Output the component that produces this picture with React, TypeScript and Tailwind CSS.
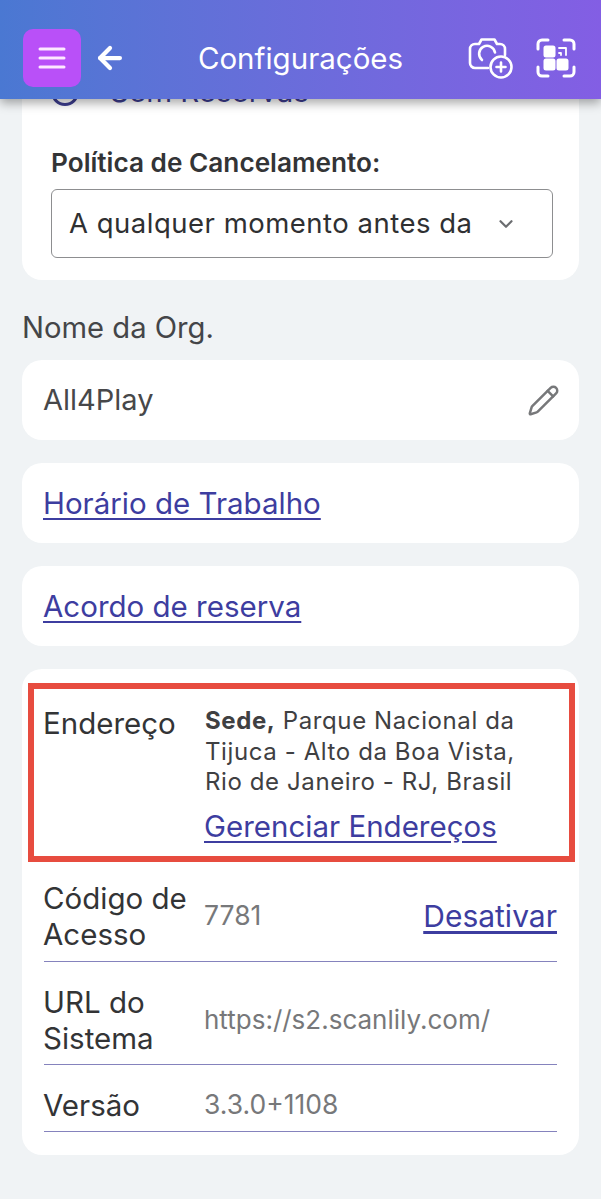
import { ArrowLeft, ChevronDown, Pencil } from "lucide-react"

const font = "font-['Inter','Noto_Sans',sans-serif]"
const link = "text-[29.5px] text-[#3d3da0] underline underline-offset-4"

function Burger() {
  return (
    <svg width="28" height="22" viewBox="0 0 28 22" fill="none" stroke="#fde8ff" strokeWidth="3" strokeLinecap="round">
      <path d="M2 2h24M2 11h24M2 20h24" />
    </svg>
  )
}

function CameraPlus() {
  return (
    <svg width="45" height="41" viewBox="0 0 45 41" fill="none" stroke="white" strokeWidth="2.6" strokeLinecap="round" strokeLinejoin="round">
      <path d="M20 30H7a5 5 0 0 1-5-5V11a5 5 0 0 1 5-5h4l2.500-4.500h13L29 6h3a5 5 0 0 1 5 5v6" />
      <path d="M14 22a8 8 0 1 1 13-7.500" />
      <circle cx="33" cy="29" r="10.500" />
      <path d="M33 24.500v9M28.500 29h9" />
    </svg>
  )
}

function ScanGrid() {
  return (
    <svg width="40" height="40" viewBox="0 0 40 40" fill="none" stroke="white" strokeWidth="3" strokeLinecap="round" strokeLinejoin="round">
      <path d="M2 11V6a4 4 0 0 1 4-4h6M28 2h6a4 4 0 0 1 4 4v5M2 29v5a4 4 0 0 0 4 4h6M38 29v5a4 4 0 0 1-4 4h-6" />
      <rect x="9" y="9" width="9" height="9" rx="1" fill="white" />
      <rect x="9" y="22" width="9" height="9" rx="1" fill="white" />
      <rect x="22" y="22" width="9" height="9" rx="1" fill="white" />
      <path d="M23 10h7v7M23 15h2v2" strokeWidth="1.8" />
    </svg>
  )
}

function Row({ label, children, right, className }: { label: string; children: React.ReactNode; right?: React.ReactNode; className: string }) {
  return (
    <div className={`flex items-center border-b border-[#8583bd] ${className}`}>
      <div className="-ml-px w-[161px] shrink-0 text-[29.5px] leading-[36px] text-[#333436]">{label}</div>
      <div className="flex-1 text-[#77787a]">{children}</div>
      {right}
    </div>
  )
}

export default function App() {
  return (
    <div className={`relative h-[1199px] w-[601px] overflow-hidden bg-[#f0f3f5] ${font}`}>
      {/* Header */}
      <header className="absolute inset-x-0 top-0 z-10 flex h-[99px] items-end bg-gradient-to-r from-[#4a78d2] to-[#835ee4] pb-[12px] pl-[23px] pr-[25px] shadow-[0_4px_10px_rgba(0,0,0,0.35)]">
        <div className="flex h-[58px] w-[58px] items-center justify-center rounded-[10px] bg-[#b950f8]">
          <Burger />
        </div>
        <div className="ml-[12px] flex h-[58px] items-center">
          <ArrowLeft size={34} color="white" strokeWidth={3} />
        </div>
        <div className="flex h-[58px] flex-1 items-center justify-center pl-[6px] text-[29.5px] text-white">Configurações</div>
        <div className="flex h-[58px] items-center gap-[23px]">
          <CameraPlus />
          <ScanGrid />
        </div>
      </header>

      <main className="px-[22px]">
        {/* Reservas card, scrolled under the header */}
        <section className="h-[280px] rounded-b-[20px] bg-white pl-[29px] pr-[26px] pt-[148px]">
          <div className="text-[26.2px] font-semibold leading-[29px] text-[#333436]">Política de Cancelamento:</div>
          <div className="mt-[12px] flex h-[69px] items-center justify-between rounded-[6px] border border-[#8d8e90] pl-[17px] pr-[35px] pt-px">
            <span className="text-[27.5px] tracking-[0.5px] text-[#2f3032]">A qualquer momento antes da</span>
            <ChevronDown size={22} color="#6b6d70" strokeWidth={2.4} />
          </div>
        </section>

        <div className="mt-[31px] text-[29.2px] leading-[34px] text-[#444548]">Nome da Org.</div>

        <section className="mt-[15px] flex h-[80px] items-center justify-between rounded-[20px] bg-white pl-[21px] pr-[19px]">
          <span className="text-[29px] text-[#47484a]">All4Play</span>
          <Pencil size={33} color="#77787a" strokeWidth={1.8} />
        </section>

        <section className="mt-[23px] flex h-[80px] items-center rounded-[20px] bg-white px-[21px]">
          <a className={link}>Horário de Trabalho</a>
        </section>

        <section className="mt-[23px] flex h-[80px] items-center rounded-[20px] bg-white px-[21px]">
          <a className={link}>Acordo de reserva</a>
        </section>

        <section className="mt-[23px] h-[486px] rounded-[20px] bg-white px-[22px] pt-[14px]">
          {/* Highlighted address block */}
          <div className="-ml-[16px] -mr-[18px] flex h-[179px] border-[6px] border-[#e74c3f] pl-[9px] pt-[17px]">
            <div className="w-[162px] shrink-0 text-[29.5px] leading-[34px] text-[#333436]">Endereço</div>
            <div>
              <div className="text-[24px] leading-[30.5px] tracking-[0.6px] text-[#3f4042]">
                <b className="font-bold">Sede,</b> Parque Nacional da<br />
                Tijuca - Alto da Boa Vista,<br />
                Rio de Janeiro - RJ, Brasil
              </div>
              <a className={`-ml-px mt-[8px] block leading-[40px] ${link}`}>Gerenciar Endereços</a>
            </div>
          </div>

          <Row className="h-[100px] pt-[9px]" label="Código de Acesso" right={<a className="text-[30px] text-[#3d3da0] underline underline-offset-4">Desativar</a>}>
            <span className="text-[26.5px]">7781</span>
          </Row>
          <Row className="h-[103px] pt-[13px]" label="URL do Sistema">
            <span className="text-[26px]">https://s2.scanlily.com/</span>
          </Row>
          <Row className="h-[67px] pt-[14px]" label="Versão">
            <span className="text-[26.5px]">3.3.0+1108</span>
          </Row>
        </section>
      </main>

      {/* Scrolled radio row clipped by the header */}
      <div className="absolute left-[51px] top-[76px] flex items-center gap-[31px]">
        <div className="h-[28px] w-[28px] rounded-full border-[3px] border-[#3d3d8f]" />
        <span className="-mt-[2px] text-[29.5px] leading-[34px] text-[#3d3d8f]">Sem Reservas</span>
      </div>
    </div>
  )
}
